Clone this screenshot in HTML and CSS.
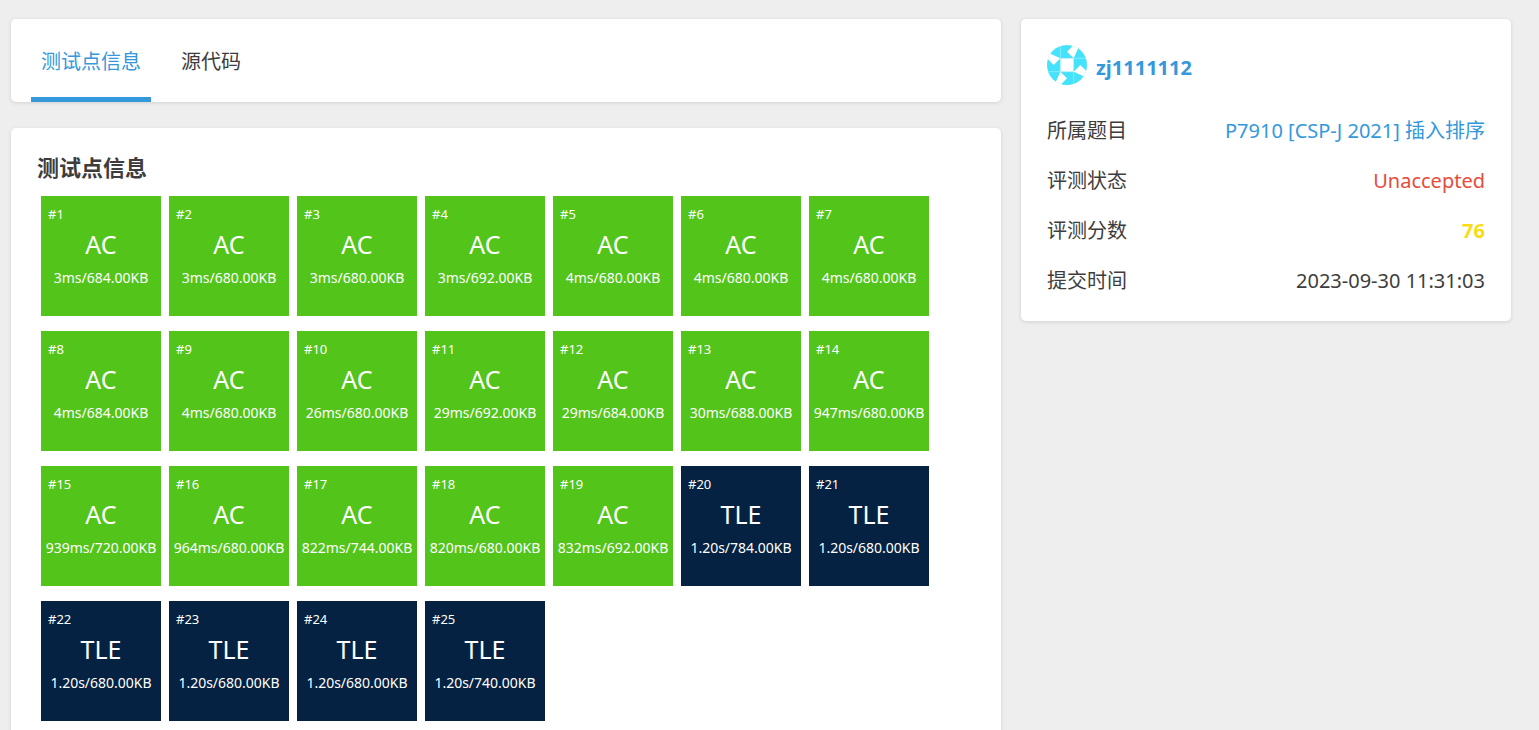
FILE: index.html
```html
<!DOCTYPE html>
<html lang="zh-CN">
<head>
<meta charset="utf-8">
<title>测试点信息</title>
<link rel="stylesheet" href="styles.css">
</head>
<body>
<div class="page">
  <main class="main">
    <nav class="card tabs">
      <a class="tab tab-active" href="#info">测试点信息</a>
      <a class="tab" href="#source">源代码</a>
    </nav>
    <section class="card results" id="info">
      <h1 class="title">测试点信息</h1>
      <div class="cases" id="cases"></div>
    </section>
  </main>
  <aside class="card side">
    <div class="user">
      <svg class="avatar" viewBox="0 0 120 120" aria-hidden="true">
        <defs><clipPath id="round"><circle cx="60" cy="60" r="60"/></clipPath></defs>
        <g clip-path="url(#round)">
          <path fill="#45e2fb" d="M0 0H120V120H0z"/>
          <path fill="#fff" d="M40 40H80V80H40zM80 0V40L60 20zM0 40H40L20 60zM40 80V120L60 100zM80 80H120L100 60zM80 40L98 0H80zM40 40L0 22V40zM40 80L22 120H40zM80 80L120 98V80z"/>
          <path stroke="#a5f1fd" stroke-width="2" d="M40 0V40M80 40V80M40 40V80M80 80V120M40 40H80M80 40H120M0 80H40M40 80H80"/>
        </g>
      </svg>
      <a class="username" href="#user">zj1111112</a>
    </div>
    <dl class="facts">
      <div class="fact"><dt>所属题目</dt><dd><a class="link" href="#problem">P7910 [CSP-J 2021] 插入排序</a></dd></div>
      <div class="fact"><dt>评测状态</dt><dd class="failed">Unaccepted</dd></div>
      <div class="fact"><dt>评测分数</dt><dd class="score">76</dd></div>
      <div class="fact"><dt>提交时间</dt><dd>2023-09-30 11:31:03</dd></div>
    </dl>
  </aside>
</div>
<script src="cases.js"></script>
</body>
</html>
```

FILE: styles.css
```css
* { box-sizing: border-box; }

body {
  margin: 0;
  background: #eee;
  color: #3d3d3d;
  font: 20px/30px "Noto Sans", "Noto Sans CJK SC", sans-serif;
}

a { color: #3498db; text-decoration: none; }

.page {
  display: grid;
  grid-template-columns: 99fr 49fr;
  align-items: start;
  gap: 20px;
  padding: 19px 28px 0 11px;
}

.main { display: grid; gap: 26px; }

.card {
  background: #fff;
  border-radius: 5px;
  box-shadow: 0 1px 4px rgba(0, 0, 0, 0.12);
}

.tabs { display: flex; gap: 20px; padding: 0 20px; }

.tab {
  padding: 28px 10px 20px;
  border-bottom: 5px solid transparent;
  color: #3d3d3d;
}

.tab-active { border-color: #3498db; color: #3498db; }

.results { padding: 24px 26px; }

.title { margin: 0; font-size: 22px; line-height: 30px; }

.cases {
  display: flex;
  flex-wrap: wrap;
  gap: 15px 8px;
  padding: 14px 4px 0;
}

.case {
  width: 120px;
  height: 120px;
  color: #fff;
  text-align: center;
  white-space: nowrap;
}

.ac { background: #52c41a; }
.tle { background: #052242; }

.case-id {
  padding: 8px 7px 0;
  font-size: 13px;
  line-height: 20px;
  text-align: left;
}

.case-status { font-size: 25px; line-height: 40px; }
.case-usage { font-size: 14px; line-height: 28px; }

.side { padding: 26px 26px 25px; }
.user { display: flex; align-items: center; gap: 9px; }
.avatar { width: 40px; height: 40px; }
.username { padding-top: 6px; font-weight: 700; }

.facts { display: grid; gap: 20px; margin: 31px 0 0; }
.fact { display: flex; justify-content: space-between; }
dd { margin: 0; }
.failed { color: #e74c3c; }
.score { color: #fadb14; font-weight: 700; }
```

FILE: cases.js
```js
const cases = [
  ["AC", "3ms/684.00KB"], ["AC", "3ms/680.00KB"], ["AC", "3ms/680.00KB"],
  ["AC", "3ms/692.00KB"], ["AC", "4ms/680.00KB"], ["AC", "4ms/680.00KB"],
  ["AC", "4ms/680.00KB"], ["AC", "4ms/684.00KB"], ["AC", "4ms/680.00KB"],
  ["AC", "26ms/680.00KB"], ["AC", "29ms/692.00KB"], ["AC", "29ms/684.00KB"],
  ["AC", "30ms/688.00KB"], ["AC", "947ms/680.00KB"], ["AC", "939ms/720.00KB"],
  ["AC", "964ms/680.00KB"], ["AC", "822ms/744.00KB"], ["AC", "820ms/680.00KB"],
  ["AC", "832ms/692.00KB"], ["TLE", "1.20s/784.00KB"], ["TLE", "1.20s/680.00KB"],
  ["TLE", "1.20s/680.00KB"], ["TLE", "1.20s/680.00KB"], ["TLE", "1.20s/680.00KB"],
  ["TLE", "1.20s/740.00KB"]
];

document.getElementById("cases").innerHTML = cases.map(([status, usage], i) => `
  <div class="case ${status.toLowerCase()}">
    <div class="case-id">#${i + 1}</div>
    <div class="case-status">${status}</div>
    <div class="case-usage">${usage}</div>
  </div>`).join("");
```
